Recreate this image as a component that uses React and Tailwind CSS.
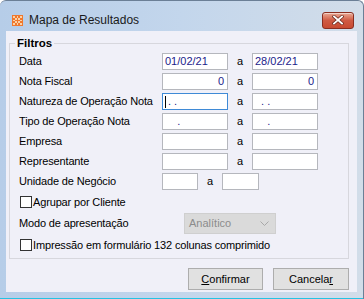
import React from "react";

const font = { fontFamily: '"Liberation Sans", Arial, sans-serif' };

function Field({ w = "w-[66px]", children, focused, align = "left" }) {
  return (
    <div
      className={`${w} h-[17px] bg-white border ${
        focused ? "border-[#3f8ad6]" : "border-[#b5b7bd]"
      } flex items-center ${align === "right" ? "justify-end pr-[3px]" : "pl-[2px]"} text-[11px] text-[#1b1b8a] whitespace-pre leading-none`}
    >
      {children}
    </div>
  );
}

function Row({ label, left, right }) {
  return (
    <div className="flex items-center h-[17px]">
      <div className="w-[143px] text-[11px] text-black leading-none tracking-[-0.15px]">{label}</div>
      {left}
      <div className="w-[24px] text-center text-[11px] text-black leading-none">a</div>
      {right}
    </div>
  );
}

function Check({ label }) {
  return (
    <div className="flex items-center h-[14px] pl-[1px]">
      <div className="w-[12px] h-[12px] border border-[#333] bg-white" />
      <div className="ml-[1px] text-[11px] text-black leading-none tracking-[-0.15px]">{label}</div>
    </div>
  );
}

export default function App() {
  return (
    <div
      style={font}
      className="w-[364px] h-[299px] flex flex-col overflow-hidden rounded-t-[6px] border-t border-r border-[#6b7f96] bg-gradient-to-r from-[#b6cde8] via-[#c3d6ec] to-[#d2dde9]"
    >
      <div className="h-[30px] flex items-center pt-[8px] pl-[12px] pr-[9px] shrink-0">
        <svg width="11" height="11" viewBox="0 0 11 11" className="shrink-0">
          <rect width="11" height="11" fill="#f0782c" />
          <path d="M1 1h2v2H1zM5 1h1v2H5zM8 1h2v2H8zM3 3h2v2H3zM6 3h2v2H6zM1 5h2v1H1zM8 5h2v1H8zM3 6h2v2H3zM6 6h2v2H6zM1 8h2v2H1zM5 8h1v2H5zM8 8h2v2H8z" fill="#fbd2a8" />
        </svg>
        <div className="ml-[6px] text-[12px] text-[#1a1a1a] leading-none">Mapa de Resultados</div>
        <div className="flex-1" />
        <div className="w-[32px] h-[17px] rounded-[3px] border border-[#8a2e20] bg-gradient-to-b from-[#e9a995] via-[#cf5a43] to-[#c84a31] flex items-center justify-center shadow-[inset_0_1px_0_rgba(255,255,255,0.5)]">
          <svg width="12" height="10" viewBox="0 0 12 10">
            <path d="M2 1.5L10 8.5M10 1.5L2 8.5" stroke="#6b2a1e" strokeWidth="3.2" strokeLinecap="square" />
            <path d="M2 1.5L10 8.5M10 1.5L2 8.5" stroke="#ffffff" strokeWidth="1.8" strokeLinecap="square" />
          </svg>
        </div>
      </div>
      <div className="flex-1 mx-[6px] bg-[#f0f0f8] pt-[12px] pl-[3px] pr-[8px] flex flex-col">
        <div className="relative h-[216px] border border-[#d7d7dd] pt-[9px] pl-[9px] flex flex-col gap-[3px]">
          <div className="absolute -top-[8px] left-[5px] px-[2px] bg-[#f0f0f8] text-[11.5px] font-bold text-black leading-[14px]">
            Filtros
          </div>
          <Row label="Data" left={<Field>01/02/21</Field>} right={<Field>28/02/21</Field>} />
          <Row label="Nota Fiscal" left={<Field align="right">0</Field>} right={<Field align="right">0</Field>} />
          <Row
            label="Natureza de Operação Nota"
            left={
              <Field focused>
                <span className="inline-block w-[1px] h-[12px] bg-black mr-[2px]" />
                {". ."}
              </Field>
            }
            right={<Field>{"  . ."}</Field>}
          />
          <Row label="Tipo de Operação Nota" left={<Field>{"    ."}</Field>} right={<Field>{"    ."}</Field>} />
          <Row label="Empresa" left={<Field />} right={<Field />} />
          <Row label="Representante" left={<Field />} right={<Field />} />
          <Row label="Unidade de Negócio" left={<Field w="w-[36px]" />} right={<Field w="w-[37px]" />} />
          <div className="pt-[2px]">
            <Check label="Agrupar por Cliente" />
          </div>
          <div className="flex items-center h-[21px] mt-[1px]">
            <div className="w-[165px] text-[11px] text-black leading-none tracking-[-0.15px]">Modo de apresentação</div>
            <div className="w-[92px] h-[21px] bg-[#dadada] border border-[#cfcfcf] flex items-center pl-[4px] pr-[6px]">
              <div className="flex-1 text-[11px] text-[#8c8c8c] leading-none">Analítico</div>
              <svg width="9" height="5" viewBox="0 0 9 5">
                <path d="M0.5 0.5L4.5 4.5L8.5 0.5" stroke="#a8a8a8" fill="none" />
              </svg>
            </div>
          </div>
          <div className="pt-[1px]">
            <Check label="Impressão em formulário 132 colunas comprimido" />
          </div>
        </div>
        <div className="flex justify-end gap-[10px] mt-[9px]">
          <div className="w-[75px] h-[22px] bg-[#e1e1e1] border border-[#adadad] flex items-center justify-center text-[11px] text-black leading-none">
            <span><span className="underline">C</span>onfirmar</span>
          </div>
          <div className="w-[76px] h-[22px] bg-[#e1e1e1] border border-[#adadad] flex items-center justify-center text-[11px] text-black leading-none">
            <span>Cancela<span className="underline">r</span></span>
          </div>
        </div>
      </div>
      <div className="h-[6px] shrink-0" />
      <div className="h-[1px] bg-[#25c3e3] shrink-0" />
    </div>
  );
}
